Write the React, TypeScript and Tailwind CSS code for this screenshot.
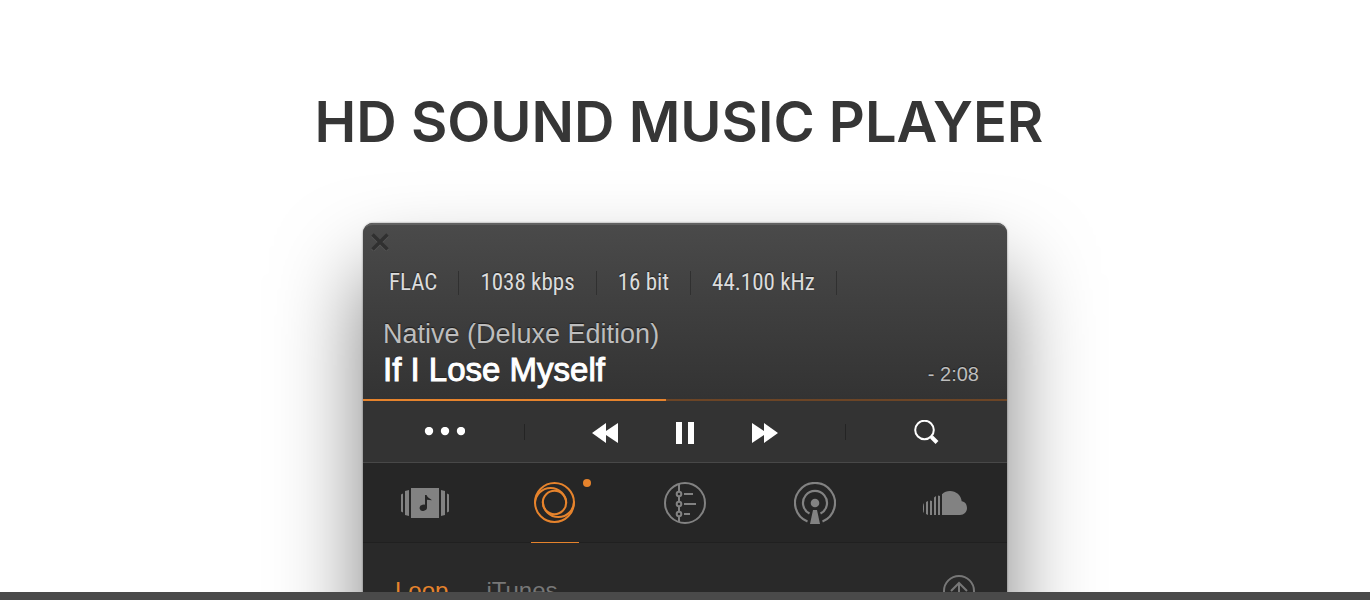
import type { ReactNode } from 'react'

const stats = ['FLAC', '1038 kbps', '16 bit', '44.100 kHz']

function IconButton({ label, className = '', children }: { label: string; className?: string; children: ReactNode }) {
  return (
    <button type="button" aria-label={label} className={`flex items-center justify-center ${className}`}>
      {children}
    </button>
  )
}

function AlbumsIcon() {
  return (
    <svg width="48" height="42" viewBox="0 0 48 42" fill="currentColor">
      <path d="M0 12.5 2 11.5V30.500L0 29.500ZM4 9 8 8V34L4 33ZM40 8 44 9V33L40 34ZM46 11.500 48 12.500V29.500L46 30.500Z" />
      <path d="M10 6H38V36H10Z" />
      <g fill="#262626">
        <ellipse cx="22.300" cy="25.800" rx="3.700" ry="3.100" transform="rotate(-15 22.300 25.800)" />
        <path d="M24 13H25.500C26.500 15.500 29 16.500 31 18.200L26 17.800V26H24Z" />
      </g>
    </svg>
  )
}

function LoopIcon() {
  return (
    <svg width="42" height="42" viewBox="0 0 42 42" fill="none" stroke="currentColor" strokeWidth="2">
      <circle cx="20.500" cy="20.500" r="19.500" />
      <circle cx="20.500" cy="20.500" r="11.700" />
      <path d="M1 21.500A15.600 15.600 0 0 1 32.200 21.500" />
      <path d="M8.800 19.500A15.600 15.600 0 0 0 40 19.500" />
    </svg>
  )
}

function PlaylistIcon() {
  return (
    <svg width="42" height="42" viewBox="0 0 42 42" fill="none" stroke="currentColor" strokeWidth="2">
      <circle cx="21" cy="21" r="20" />
      <path d="M15 2V9.500M15 14.500V19.500M15 24.500V29.500M15 34.500V40M20 12H29M20 22H32M20 32H26" />
      <circle cx="15" cy="12" r="2.300" />
      <circle cx="15" cy="22" r="2.300" />
      <circle cx="15" cy="32" r="2.300" />
    </svg>
  )
}

function PodcastIcon() {
  return (
    <svg width="42" height="42" viewBox="0 0 42 42" fill="none" stroke="currentColor" strokeWidth="2.200">
      <path d="M13.500 39.500A20 20 0 1 1 28.500 39.500" />
      <path d="M15.500 31.600A12 12 0 1 1 26.500 31.600" />
      <circle cx="21" cy="21" r="4.300" fill="currentColor" stroke="none" />
      <path d="M19 28H23L26 42H16Z" fill="currentColor" stroke="none" />
    </svg>
  )
}

function CloudIcon() {
  return (
    <svg width="44" height="42" viewBox="0 0 44 42" fill="currentColor">
      <path d="M0 24.500Q0 22 1 21V31Q0 30 0 27.500ZM3 20 5 19V33L3 32ZM7 18.500 9 19V33H7ZM11 15.500 13 14V33H11ZM15 13.500 17 14V33H15ZM19 12.200C21 10 24 9 27 9C33 9 38 13.200 38.700 19.200C41.800 19.500 44 22.300 44 26C44 30 41 33 37 33H19Z" />
    </svg>
  )
}

const tabs = [
  { label: 'Albums', icon: <AlbumsIcon />, active: false },
  { label: 'Loop', icon: <LoopIcon />, active: true },
  { label: 'Playlists', icon: <PlaylistIcon />, active: false },
  { label: 'Podcasts', icon: <PodcastIcon />, active: false },
  { label: 'Cloud', icon: <CloudIcon />, active: false },
]

function Header() {
  return (
    <header className="flex h-44 flex-col rounded-t-[10px] border-t-2 border-[#616161] bg-linear-to-b from-[#4a4a4a] to-[#333333]">
      <IconButton label="Close" className="mt-2 ml-2 size-[18px] text-[#303030]">
        <svg width="18" height="18" viewBox="0 0 18 18" fill="none">
          <path d="m1.500 2.500 15 15M16.500 2.500l-15 15" stroke="#565656" strokeWidth="3.600" />
          <path d="m1.500 1.500 15 15M16.500 1.500l-15 15" stroke="currentColor" strokeWidth="3.400" />
        </svg>
      </IconButton>
      <ul className="mt-4 flex h-8 items-center pl-[26px] font-['Roboto_Condensed','Liberation_Sans_Narrow','Liberation_Sans',sans-serif] text-[23px] text-[#dcdcdc] [text-shadow:0_-1px_1px_#222]">
        {stats.map((stat) => (
          <li key={stat} className="mr-[21px] flex items-center gap-[21px] whitespace-nowrap">
            {stat}
            <span className="h-6 w-px bg-[#303030]" />
          </li>
        ))}
      </ul>
      <div className="mt-[17px] flex items-end justify-between pr-7 pl-5 [text-shadow:0_-1px_1px_#1c1c1c]">
        <div>
          <p className="text-[27px] leading-9 text-[#bdbdbd]">Native (Deluxe Edition)</p>
          <h2 className="text-[33px] leading-9 text-white [-webkit-text-stroke:1px_white]">If I Lose Myself</h2>
        </div>
        <time className="text-xl leading-7 text-[#bdbdbd]">- 2:08</time>
      </div>
    </header>
  )
}

function Controls() {
  return (
    <div className="grid h-[62px] grid-cols-[1fr_2fr_1fr] items-center border-b border-[#484848] bg-[#333333] text-white">
      <IconButton label="More">
        <svg width="42" height="10" viewBox="0 0 42 10" fill="currentColor">
          <circle cx="6" cy="4" r="4.200" />
          <circle cx="22" cy="4" r="4.200" />
          <circle cx="38" cy="4" r="4.200" />
        </svg>
      </IconButton>
      <div className="flex items-center justify-between">
        <span className="h-4 w-px bg-[#242424]" />
        <div className="flex pt-0.5">
          <IconButton label="Previous" className="h-10 w-20">
            <svg width="26" height="20" viewBox="0 0 26 20" fill="currentColor">
              <path d="M14 0V8L26 0V20L14 12V20L0 10Z" />
            </svg>
          </IconButton>
          <IconButton label="Pause" className="h-10 w-20">
            <svg width="18" height="22" viewBox="0 0 18 22" fill="currentColor">
              <path d="M0 0H6V22H0ZM12 0H18V22H12Z" />
            </svg>
          </IconButton>
          <IconButton label="Next" className="h-10 w-20">
            <svg width="26" height="20" viewBox="0 0 26 20" fill="currentColor">
              <path d="M12 0V8L0 0V20L12 12V20L26 10Z" />
            </svg>
          </IconButton>
        </div>
        <span className="h-4 w-px bg-[#242424]" />
      </div>
      <IconButton label="Search">
        <svg width="26" height="24" viewBox="0 0 26 24" fill="none" stroke="currentColor">
          <circle cx="10.500" cy="10" r="9.300" strokeWidth="2" />
          <path d="m16.500 16 1.500 1.500" strokeWidth="2" />
          <path d="m17.500 17 5.500 5.500" strokeWidth="4" />
        </svg>
      </IconButton>
    </div>
  )
}

export default function App() {
  return (
    <div className="flex h-screen flex-col bg-white font-['Liberation_Sans',Arial,sans-serif]">
      <main className="flex min-h-0 flex-1 flex-col items-center overflow-hidden">
        <h1 className="mt-[86px] pr-3 font-[Inter,sans-serif] text-[56px] leading-[72px] font-semibold whitespace-nowrap text-[#363636]">
          HD SOUND MUSIC PLAYER
        </h1>
        <section className="mt-[65px] w-full max-w-[644px] shrink-0 rounded-t-[10px] bg-[#292929] shadow-[0_50px_85px_rgba(0,0,0,0.5),0_0_2px_rgba(0,0,0,0.5)]">
          <Header />
          <div className="h-0.5 bg-[#6c4526]">
            <div className="h-full w-[47%] bg-[#e6832c]" />
          </div>
          <Controls />
          <nav className="flex h-20 items-stretch justify-between border-b border-[#202020] bg-[#262626] px-[38px]">
            {tabs.map((tab) => (
              <button
                key={tab.label}
                type="button"
                aria-label={tab.label}
                className={`relative -mb-px flex w-12 items-center justify-center border-b ${
                  tab.active ? 'border-[#e6832c] text-[#e6832c]' : 'border-transparent text-[#828282]'
                }`}
              >
                {tab.icon}
                {tab.active && <span className="absolute top-4 -right-3 size-2 rounded-full bg-[#e6832c]" />}
              </button>
            ))}
          </nav>
          <div className="flex h-24 items-center justify-between px-8 text-2xl text-[#777777]">
            <div className="flex gap-[38px]">
              <button type="button" className="text-[#e6832c]">Loop</button>
              <button type="button">iTunes</button>
            </div>
            <IconButton label="Upload">
              <svg width="32" height="32" viewBox="0 0 32 32" fill="none" stroke="currentColor" strokeWidth="2">
                <circle cx="16" cy="16" r="15" />
                <path d="M16 25V8M8 16 16 8 24 16" />
              </svg>
            </IconButton>
          </div>
        </section>
      </main>
      <footer className="h-2 shrink-0 bg-[#4a4a4a]" />
    </div>
  )
}
